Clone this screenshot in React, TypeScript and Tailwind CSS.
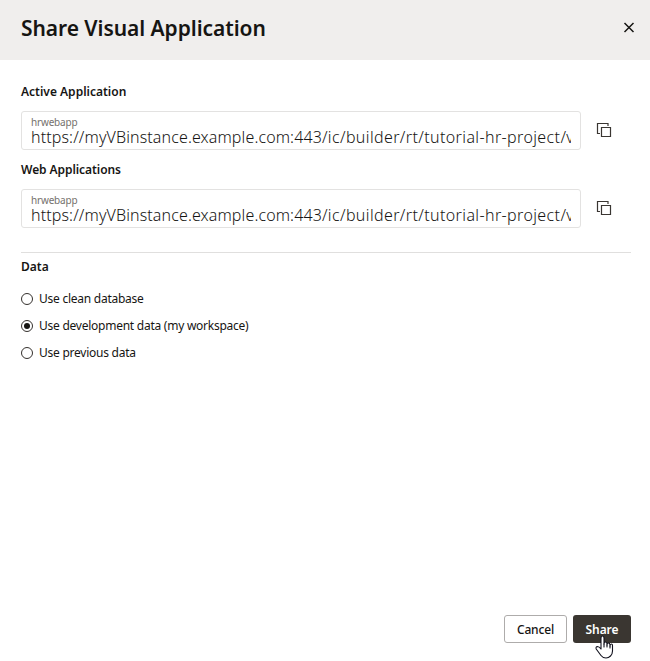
const CopyIcon = () => (
  <svg width="16" height="16" viewBox="0 0 16 16" fill="none" stroke="#3a3632" strokeWidth="1.2">
    <path d="M4 11.5H1.5V1.5H12V4" />
    <path d="M5.5 5.5H14.5V14.5H5.5Z" />
  </svg>
);

const host = 'https://myVBinstance.example.com:443';
const path = '/ic/builder/rt/tutorial-hr-project/version/preview';

function UrlField() {
  return (
    <div className="flex items-center">
      <div className="h-[39px] w-[560px] shrink-0 rounded-[3px] border border-[#e3e2e1] px-[9px] pt-[4px]">
        <div className="h-[12px] text-[10px] leading-[12px] tracking-[-0.18px] text-[#75716d]">hrwebapp</div>
        <div className="h-[20px] overflow-hidden whitespace-nowrap text-[16px] font-[350] leading-[19px]">
          <span className="tracking-[0.12px]">{host}</span>
          <span className="tracking-[0.38px]">{path}</span>
        </div>
      </div>
      <button className="mb-[2px] ml-[15px]" aria-label="Copy URL"><CopyIcon /></button>
    </div>
  );
}

function Option({ label, selected = false }: { label: string; selected?: boolean }) {
  return (
    <label className="flex h-[27px] items-center gap-[6px]">
      <span className="flex size-[12px] items-center justify-center rounded-full border border-[#35312e]">
        {selected && <span className="size-[6px] rounded-full bg-[#161513]" />}
      </span>
      <span className="whitespace-nowrap text-[12px] leading-[18px] tracking-[-0.25px]">{label}</span>
    </label>
  );
}

export default function App() {
  return (
    <div className="flex h-[661px] w-[650px] flex-col overflow-hidden bg-white font-['Noto_Sans',sans-serif] text-[#161513]">
      <header className="flex h-[60px] shrink-0 items-center justify-between bg-[#f0eeed] pl-[21px] pr-[15px]">
        <h1 className="pb-[5px] text-[21px] font-semibold leading-[28px] tracking-[-0.06px]">Share Visual Application</h1>
        <button className="mb-[5px]" aria-label="Close">
          <svg width="12" height="12" viewBox="0 0 12 12" stroke="#161513" strokeWidth="1.5">
            <path d="M1.5 1L10.5 10M10.5 1L1.5 10" />
          </svg>
        </button>
      </header>
      <main className="flex-1 pl-[21px] pr-[19px] pt-[23px]">
        <h2 className="mb-[10px] h-[18px] text-[12px] font-semibold leading-[18px]">Active Application</h2>
        <UrlField />
        <h2 className="mb-[10px] mt-[11px] h-[18px] text-[12px] font-semibold leading-[18px] tracking-[-0.07px]">Web Applications</h2>
        <UrlField />
        <hr className="mt-[24px] border-[#e0dfde]" />
        <h2 className="mt-[5px] h-[18px] text-[12px] font-semibold leading-[18px]">Data</h2>
        <div className="mt-[9px]">
          <Option label="Use clean database" />
          <Option label="Use development data (my workspace)" selected />
          <Option label="Use previous data" />
        </div>
      </main>
      <footer className="relative flex h-[46px] shrink-0 justify-end gap-[6px] pr-[19px] text-[12px] font-semibold">
        <button className="h-[28px] w-[63px] rounded-[3px] border border-[#aeacab] pt-[2px] font-medium tracking-[-0.15px]">Cancel</button>
        <button className="h-[28px] w-[58px] rounded-[3px] bg-[#3a3631] pt-[2px] tracking-[-0.1px] text-white">Share</button>
        <svg className="absolute left-[595px] top-[20px]" width="19" height="24" viewBox="0 0 19 24" fill="white" stroke="#11111d" strokeWidth="1.1" strokeLinejoin="round" strokeLinecap="round">
          <path d="M6 14V3Q6 1 7.5 1T9 3V9Q9 7 10.5 7T12 9V10Q12 8 13.4 8T15 10V11Q15 9 16.3 9T17.5 11V16Q17.5 19 15.5 21Q13.5 23 11 23Q7.8 23 6 20.5L1.2 14Q.5 11.7 2.5 11.5Q4 11.5 6 14Z" />
          <path d="M9 9V12M12 10V12M15 11V13" fill="none" />
        </svg>
      </footer>
    </div>
  );
}
